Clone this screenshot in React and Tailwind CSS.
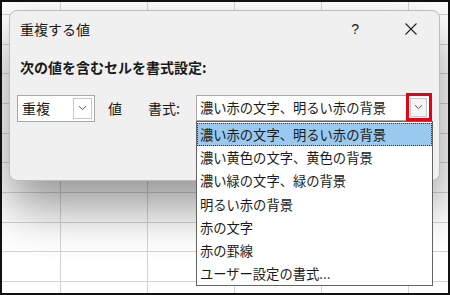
import React from "react";

const rowHeights = [13, 29.67, 29.67, 29.67, 29.67, 29.67, 29.67, 29.67, 29.67, 29.67, 29.67];
const colWidths = [59, 87, 87, 87, 87, 87];

function Chevron({ className = "" }) {
  return (
    <svg width="9" height="6" viewBox="0 0 9 6" className={className}>
      <path d="M1 1.2 L4.5 4.6 L8 1.2" fill="none" stroke="#5a5a5a" strokeWidth="1" />
    </svg>
  );
}

const items = [
  "濃い赤の文字、明るい赤の背景",
  "濃い黄色の文字、黄色の背景",
  "濃い緑の文字、緑の背景",
  "明るい赤の背景",
  "赤の文字",
  "赤の罫線",
  "ユーザー設定の書式...",
];

export default function App() {
  return (
    <div className="relative w-[450px] h-[295px] overflow-hidden border-2 border-[#111] bg-white font-['Noto_Sans_CJK_JP','Noto_Sans',sans-serif] text-[#1a1a1a]">
      {/* spreadsheet background */}
      <div className="flex flex-col">
        {rowHeights.map((h, r) => (
          <div key={r} className="flex" style={{ height: h }}>
            {colWidths.map((w, c) => (
              <div
                key={c}
                className="shrink-0 border-r border-b border-[#d4d4d4]"
                style={{ width: w }}
              />
            ))}
          </div>
        ))}
      </div>

      {/* dialog */}
      <div className="absolute left-[7px] top-[8px] w-[431px] h-[171px] rounded-[8px] border border-[#bdbdbd] bg-[#f0f0f0] shadow-[0_26px_50px_rgba(0,0,0,0.42)] px-[7px]">
        <div className="flex items-center h-[35px]">
          <span className="pl-[3px] text-[14px] leading-none">重複する値</span>
          <span className="ml-auto mr-[46px] text-[14px] leading-none font-['Liberation_Sans',sans-serif]">?</span>
          <svg width="12" height="12" viewBox="0 0 12 12" className="mr-[15px]">
            <path d="M0.5 0.5 L11.5 11.5 M11.5 0.5 L0.5 11.5" stroke="#222" strokeWidth="1.1" />
          </svg>
        </div>
        <div className="mt-[11px] h-[20px] flex items-center pl-[3px] text-[14px] font-bold leading-none">
          次の値を含むセルを書式設定:
        </div>
        <div className="mt-[18px] flex items-center h-[26px] whitespace-nowrap">
          <div className="shrink-0 flex items-center w-[78px] h-[27px] border border-[#a8a8a8] bg-white pl-[4px] pr-[2px]">
            <span className="text-[14px] leading-none">重複</span>
            <div className="ml-auto flex items-center justify-center w-[19px] h-[21px] border border-[#c8c8c8] bg-white">
              <Chevron />
            </div>
          </div>
          <span className="shrink-0 ml-[13px] text-[14px] leading-none">値</span>
          <span className="shrink-0 ml-[26px] text-[14px] leading-none">書式:</span>
          <div className="shrink-0 relative ml-[16px] w-[236px] h-[26px] border border-[#a8a8a8] bg-white flex items-center pl-[3px]">
            <span className="text-[13.3px] leading-none">濃い赤の文字、明るい赤の背景</span>
            <div className="absolute right-[-1px] top-[-3px] w-[26px] h-[28px] border-[3px] border-[#e60012] flex items-center justify-center">
              <div className="w-[17px] h-[19px] border border-[#c8c8c8] bg-[#f4f4f4] flex items-center justify-center">
                <Chevron />
              </div>
            </div>
            {/* dropdown list */}
            <div className="absolute left-[-1px] top-[25px] w-[237px] h-[165px] border border-[#646464] bg-white flex flex-col py-[1px]">
              {items.map((t, i) => (
                <div
                  key={i}
                  className={
                    "h-[23.2px] shrink-0 flex items-center pl-[3px] text-[13.3px] leading-none " +
                    (i === 0 ? "bg-[#99c9ef] outline-1 outline-dotted outline-[#333] -outline-offset-1" : "")
                  }
                >
                  {t}
                </div>
              ))}
            </div>
          </div>
        </div>
      </div>
    </div>
  );
}
